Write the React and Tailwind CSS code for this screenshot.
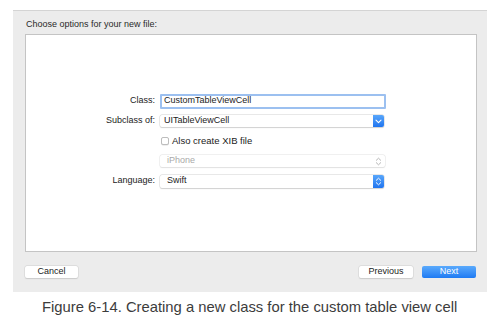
import React from "react";

const font = { fontFamily: '"Helvetica Neue", "Liberation Sans", Arial, sans-serif' };

function ChevronDown() {
  return (
    <svg width="7" height="5" viewBox="0 0 7 5" fill="none">
      <path d="M1 1.2 L3.5 3.6 L6 1.2" stroke="white" strokeWidth="1.1" strokeLinecap="round" strokeLinejoin="round" />
    </svg>
  );
}

function ChevronUpDown({ color = "white" }) {
  return (
    <svg width="7" height="9" viewBox="0 0 7 9" fill="none">
      <path d="M1.3 3.3 L3.5 1.2 L5.7 3.3" stroke={color} strokeWidth="1" strokeLinecap="round" strokeLinejoin="round" />
      <path d="M1.3 5.7 L3.5 7.8 L5.7 5.7" stroke={color} strokeWidth="1" strokeLinecap="round" strokeLinejoin="round" />
    </svg>
  );
}

export default function App() {
  return (
    <div className="w-[495px] h-[319px] bg-white flex flex-col" style={font}>
      <div className="ml-[13px] mt-[10px] w-[474px] h-[282px] bg-[#ececec] border-t border-[#d4d4d4] flex flex-col">
        <div className="h-[23px] pl-[13px] flex items-center text-[9px] text-[#2a2a2a] pt-[5px]">
          Choose options for your new file:
        </div>
        <div className="ml-[12px] w-[452px] h-[218px] bg-white border border-[#c4c4c4] flex flex-col pt-[56px] pl-[69px]">
          <div className="grid grid-cols-[60px_226px] gap-x-[5px] auto-rows-[20px] text-[9px] text-[#222]">
            <div className="flex items-center justify-end">Class:</div>
            <div className="flex items-center">
              <div className="w-[226px] h-[15px] border-2 border-[#9cc0f0] rounded-[1px] flex items-center pl-[2px] bg-white">
                CustomTableViewCell
              </div>
            </div>

            <div className="flex items-center justify-end">Subclass of:</div>
            <div className="flex items-center">
              <div className="w-[224px] h-[12px] rounded-[2px] bg-white shadow-[0_0_0_0.5px_#d6d6d6,0_0.5px_1px_#cfcfcf] flex items-center justify-between pl-[4px]">
                <span>UITableViewCell</span>
                <div className="w-[11px] h-[12px] rounded-r-[2px] bg-gradient-to-b from-[#58a6fb] to-[#1f74ef] flex items-center justify-center">
                  <ChevronDown />
                </div>
              </div>
            </div>

            <div></div>
            <div className="flex items-center">
              <div className="w-[8px] h-[8px] ml-[1px] rounded-[2px] bg-white border border-[#bdbdbd] shadow-[0_0.5px_0.5px_#ddd]"></div>
              <span className="ml-[3px] text-[9.5px]">Also create XIB file</span>
            </div>

            <div></div>
            <div className="flex items-center">
              <div className="w-[225px] h-[12px] rounded-[2px] bg-white shadow-[0_0_0_0.5px_#e4e4e4,0_0.5px_1px_#e0e0e0] flex items-center justify-between pl-[7px] pr-[3px] text-[#a9a9a9]">
                <span>iPhone</span>
                <ChevronUpDown color="#b5b5b5" />
              </div>
            </div>

            <div className="flex items-center justify-end">Language:</div>
            <div className="flex items-center">
              <div className="w-[224px] h-[13px] rounded-[2px] bg-white shadow-[0_0_0_0.5px_#d6d6d6,0_0.5px_1px_#cfcfcf] flex items-center justify-between pl-[7px]">
                <span>Swift</span>
                <div className="w-[11px] h-[13px] rounded-r-[2px] bg-gradient-to-b from-[#58a6fb] to-[#1f74ef] flex items-center justify-center">
                  <ChevronUpDown />
                </div>
              </div>
            </div>
          </div>
        </div>
        <div className="flex items-center mt-[14px] pl-[12px] pr-[11px] text-[9px]">
          <div className="w-[53px] h-[12px] bg-white rounded-[2px] shadow-[0_0_0_0.5px_#d2d2d2,0_0.5px_1px_#c8c8c8] flex items-center justify-center text-[#222]">
            Cancel
          </div>
          <div className="flex-1"></div>
          <div className="w-[54px] h-[12px] bg-white rounded-[2px] shadow-[0_0_0_0.5px_#d2d2d2,0_0.5px_1px_#c8c8c8] flex items-center justify-center text-[#222]">
            Previous
          </div>
          <div className="w-[54px] h-[12px] ml-[9px] rounded-[2px] bg-gradient-to-b from-[#5aaafc] to-[#1d7af3] flex items-center justify-center text-white">
            Next
          </div>
        </div>
      </div>
      <div className="mt-[6px] pl-[42px] text-[14.8px] text-[#3c3c3c] leading-[18px]" style={{ fontFamily: '"Liberation Sans", Arial, sans-serif' }}>
        Figure 6-14. Creating a new class for the custom table view cell
      </div>
    </div>
  );
}
